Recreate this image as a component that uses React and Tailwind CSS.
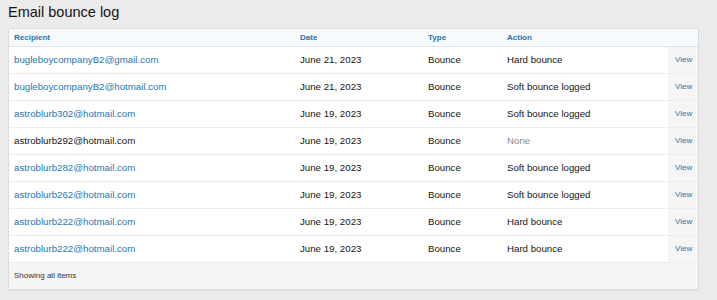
import React from 'react';

const rows = [
  { email: 'bugleboycompanyB2@gmail.com', date: 'June 21, 2023', action: 'Hard bounce', link: true },
  { email: 'bugleboycompanyB2@hotmail.com', date: 'June 21, 2023', action: 'Soft bounce logged', link: true },
  { email: 'astroblurb302@hotmail.com', date: 'June 19, 2023', action: 'Soft bounce logged', link: true },
  { email: 'astroblurb292@hotmail.com', date: 'June 19, 2023', action: 'None', link: false },
  { email: 'astroblurb282@hotmail.com', date: 'June 19, 2023', action: 'Soft bounce logged', link: true },
  { email: 'astroblurb262@hotmail.com', date: 'June 19, 2023', action: 'Soft bounce logged', link: true },
  { email: 'astroblurb222@hotmail.com', date: 'June 19, 2023', action: 'Hard bounce', link: true },
  { email: 'astroblurb222@hotmail.com', date: 'June 19, 2023', action: 'Hard bounce', link: true },
];

const App = () => {
  return (
    <div className="w-[717px] h-[300px] bg-[#ebebeb] px-2 pt-[2px] font-['Helvetica','Liberation_Sans',Arial,sans-serif] text-[#141414]">
      <h1 className="text-[14.5px] leading-[20px] h-[26px]">Email bounce log</h1>
      <div className="w-[691px] bg-white border border-[#dcdcdc] rounded-[2px] shadow-[0_1px_1px_rgba(0,0,0,0.06)] overflow-hidden">
        <div className="flex h-[18px] items-center bg-[#f7fafd] border-b border-[#dce3ea] text-[8px] font-bold text-[#2577b1]">
          <div className="w-[291px] pl-[5px]">Recipient</div>
          <div className="w-[128px]">Date</div>
          <div className="w-[79px]">Type</div>
          <div className="flex-1">Action</div>
        </div>
        {rows.map((r, i) => (
          <div key={i} className="flex h-[27px] items-stretch border-b border-[#ececec] text-[9.7px]">
            <div className={`w-[291px] pl-[5px] flex items-center ${r.link ? 'text-[#2577b1]' : 'text-[#141414]'}`}>{r.email}</div>
            <div className="w-[128px] flex items-center">{r.date}</div>
            <div className="w-[79px] flex items-center">Bounce</div>
            <div className={`flex-1 flex items-center ${r.action === 'None' ? 'text-[#8c8c8c]' : ''}`}>{r.action}</div>
            <div className="w-[30px] bg-[#f5f5f5] flex items-center pl-[7px] text-[8px] text-[#2577b1]">View</div>
          </div>
        ))}
        <div className="h-[26px] bg-[#f5f5f5] flex items-center pl-[5px] text-[8px] text-[#333]">Showing all items</div>
      </div>
    </div>
  );
};

export default App;
